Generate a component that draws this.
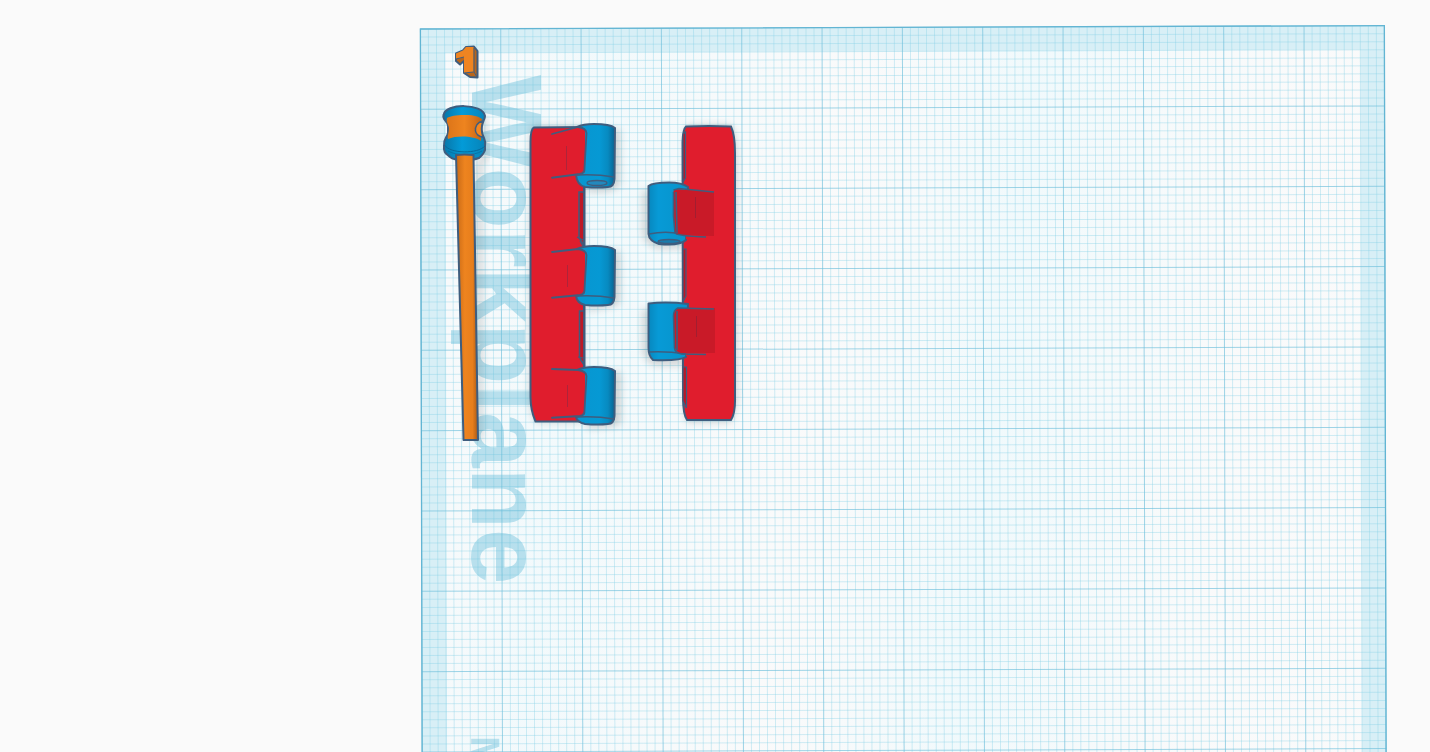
import React from 'react';

const OUTLINE = '#3f5d7e';
const RED = '#e01d2d';
const DARK_RED = '#c91a28';
const STEP = 8.033;

const COUNT_X = 120;
const COUNT_Y = 96;

function Grid() {
  const width = COUNT_X * STEP;
  const height = COUNT_Y * STEP;
  const cols = Array.from({ length: COUNT_X + 1 }, (_, i) => i);
  const rows = Array.from({ length: COUNT_Y + 1 }, (_, i) => i);
  return (
    <g transform="matrix(1 -0.0035 0.0024 1 420.4 29)">
      <rect width={width} height={height} fill="#d8eff6" />
      <rect x="25" y="24" width={width - 49} height={height} fill="#f9fafb" />
      <rect x="25" y="24" width={width - 49} height={height} fill="url(#sheen)" />
      <g stroke="#83cfe6" strokeOpacity="0.36" strokeWidth="1">
        {cols.filter((i) => i % 10 !== 0).map((i) => (
          <line key={`c${i}`} x1={i * STEP} x2={i * STEP} y1="0" y2={height} />
        ))}
        {rows.filter((i) => i % 10 !== 0).map((i) => (
          <line key={`r${i}`} x1="0" x2={width} y1={i * STEP} y2={i * STEP} />
        ))}
      </g>
      <g stroke="#6dbfda" strokeOpacity="0.65" strokeWidth="1">
        {cols.filter((i) => i % 10 === 0).map((i) => (
          <line key={`c${i}`} x1={i * STEP} x2={i * STEP} y1="0" y2={height} />
        ))}
        {rows.filter((i) => i % 10 === 0).map((i) => (
          <line key={`r${i}`} x1="0" x2={width} y1={i * STEP} y2={i * STEP} />
        ))}
      </g>
      <rect width={width} height={height} fill="none" stroke="#62b5d3" strokeWidth="1.3" />
    </g>
  );
}

function PlaneLabels() {
  return (
    <g fill="#64bcd8" fillOpacity="0.42" fontFamily="'Liberation Sans', Arial, sans-serif" fontWeight="700">
      <text transform="translate(472 75) rotate(90)" fontSize="100">Workplane</text>
      <text transform="translate(471 736) rotate(90)" fontSize="41">M</text>
    </g>
  );
}

function Digit() {
  return (
    <g stroke={OUTLINE} strokeWidth="2" strokeLinejoin="round">
      <path d="M466 47L474 46.500L477.500 51V77.500L470 77L464 73V61L460 64.500L456 61V53.500L463 50.500Z" fill="#b8651b" />
      <path d="M466 47H473.500V72L464 73V57.500L456 59V53.500L463 50.500Z" fill="#ee8421" stroke="none" />
      <path d="M474 48V72L477 77M464 73L473.500 72M456 59L464 57" fill="none" strokeWidth="1" />
    </g>
  );
}

function Pin() {
  return (
    <g stroke={OUTLINE} strokeWidth="2" strokeLinejoin="round">
      <path d="M443.500 115C445 103 483 103 485 116C485 119 483 121 482.500 124C481 128 482 134 484 138Q486 142 485 147C486 153 481 156 479 158C471 161 455 161 450 157C447 154 443 153 444 146C443 139 447 138 448 133V126C448 121 442 120 443.500 115Z" fill="url(#pinBlue)" />
      <path d="M447 118C451 116 455 115 465 115C475 115 479 117 482 119C483 122 480 124 480 130C480 135 482 138 481 141C475 136 457 135 448 139C447 136 449 134 449 128C448 123 446 122 447 118Z" fill="url(#pinOrange)" stroke="none" />
      <path d="M483 121C477 122 475 127 475.500 131C476 134 479 137 483 137Q480 129 483 121Z" fill="#f38721" strokeWidth="1.500" />
      <path d="M444.500 145C450 154 478 154 485 146" fill="none" stroke="#07699a" strokeWidth="1" />
      <path d="M448 151C457 156 474 156 482 151" fill="none" stroke="#07699a" strokeWidth="1" opacity="0.7" />
      <path d="M456 155Q464 154 473.500 155L478 440H463.500Z" fill="url(#shaft)" />
    </g>
  );
}

type KnuckleProps = { top: number; height: number; lip: number; tilt: number; hollow?: boolean };

function RightKnuckle({ top, height, lip, tilt, hollow = false }: KnuckleProps) {
  const end = top + height;
  return (
    <g stroke={OUTLINE} strokeLinejoin="round" strokeLinecap="round" fill="none">
      <path
        d={`M577 ${top + 3}Q583 ${top} 594 ${top}Q610 ${top} 615 ${top + 4}L614.500 ${end - 8}Q614 ${end} 608 ${end}Q598 ${end + 1} 585 ${end}Q577 ${end - 2} 576 ${end - lip}Z`}
        fill="url(#blueRight)"
        strokeWidth="2"
      />
      <path d={`M577 ${end - lip}Q597 ${end - lip - 1} 614 ${end - lip + 2}`} strokeWidth="1.500" />
      {hollow && <ellipse cx="597" cy={end - 4} rx="10" ry="2.500" fill="#2389bd" strokeWidth="1.300" />}
      <path d={`M551 ${top + 3 + tilt}L579 ${top + 3}L585 ${top + 5}V${end - lip - 3}L580 ${end - lip}L551 ${end - lip + 1 + tilt / 4}Z`} fill={RED} stroke="none" />
      <path d={`M552 ${top + 3 + tilt}L578 ${top + 3}Q586 ${top + 4} 586.500 ${top + 9}L584.500 ${end - lip - 7}Q585 ${end - lip - 2} 580 ${end - lip - 1}L552 ${end - lip + 1 + tilt / 4}`} strokeWidth="1.800" />
    </g>
  );
}

function LeftPlate() {
  return (
    <g>
      <path d="M533 126H583V422H536Q530 411 530 397L530 142Q531 128 533 126Z" fill="#000" opacity="0.16" filter="url(#shadow)" />
      <path d="M534 127.500L584 127V421.500H535.500Q530.500 410 530.500 397L530.500 142Q530.500 129 534 127.500Z" fill={RED} stroke={OUTLINE} strokeWidth="2" />
      <g fill="#bd1826" stroke={OUTLINE} strokeWidth="1.500">
        <path d="M579 192H584V245L579 238Z" />
        <path d="M579.500 311H584V365L579.500 357Z" />
      </g>
      <path d="M584.500 185V248M584.500 303V368" stroke={OUTLINE} strokeWidth="2" />
      <path d="M577 237L583 240M580 241L584 248M578 357L583 358M580 359L584 365" stroke={OUTLINE} strokeWidth="1.200" />
      <path d="M615 129V184L606 187H587M615 251V301L587 306M616 372V421L587 424" fill="none" stroke="#000" strokeWidth="7" opacity="0.22" filter="url(#shadow)" />
      <RightKnuckle top={124} height={63} lip={12} tilt={7} hollow />
      <RightKnuckle top={246} height={59} lip={9} tilt={3} />
      <RightKnuckle top={367} height={57} lip={7} tilt={-1} />
      <path d="M566.500 146V170M567.500 265V287M567.500 385V407" stroke="#8e2a44" strokeWidth="1" opacity="0.6" />
    </g>
  );
}

function RightPlate() {
  return (
    <g>
      <path d="M686 126H731Q736 138 736 160V400L731 421H686Z" fill="#000" opacity="0.2" filter="url(#shadow)" />
      <path d="M647 190V236L656 244H684M647 309V353L654 361H684" fill="none" stroke="#000" strokeWidth="6" opacity="0.22" filter="url(#shadow)" />
      <path d="M686 126.500Q709 125.500 731 126.500Q735 135 735 153V397Q735.500 413 731 420H687Q683 414 683 397L682.500 142Q683 129 686 126.500Z" fill={RED} stroke={OUTLINE} strokeWidth="2" />
      <g fill="#ba1726" stroke={OUTLINE} strokeWidth="1.200">
        <path d="M683 134L685.500 132V178L683 182Z" />
        <path d="M683 249H686V296L683 302Z" />
        <path d="M683 367H686.500V408L683 401Z" />
      </g>
      <g stroke={OUTLINE} strokeWidth="2" strokeLinejoin="round">
        <path d="M648.500 186Q653 182.500 669 182.500Q682 182.500 688 187L686 240Q680 246 659 244Q649 241 648.500 234Z" fill="url(#blueLeft)" />
        <path d="M649 234Q668 230 686 235" fill="none" strokeWidth="1.500" />
        <ellipse cx="669" cy="241.500" rx="11" ry="2" fill="#187cad" strokeWidth="1.300" />
        <path d="M648.500 303.500Q667 301.500 688 304L686 357Q680 361 653 360Q648.500 356 648.500 348Z" fill="url(#blueLeft)" />
        <path d="M649 352Q666 351 687 354" fill="none" strokeWidth="1.500" />
      </g>
      <path d="M685 189H714V239H686ZM686 308H716V356H686Z" fill={RED} />
      <path d="M676 189L714 192V236L677 235Q674 233 674 221L673 194Q673 190 676 189Z" fill={DARK_RED} />
      <path d="M679 308H715V353H679Q674 350 674 342V313Q674 309 679 308Z" fill={DARK_RED} />
      <path d="M673.500 192V216L675 233Q678 236 706 237M673.500 190L679 188.500L714 192M676 192L677 233" fill="none" stroke={OUTLINE} strokeWidth="1.600" />
      <path d="M714 309L678 308Q673.500 310 673.500 316L674.500 348Q675 353 682 354L706 354.500M677 311V350" fill="none" stroke={OUTLINE} strokeWidth="1.600" />
      <path d="M695.500 197V218M696.500 316V337" stroke="#922136" strokeWidth="1" opacity="0.7" />
    </g>
  );
}

export default function App() {
  return (
    <main className="min-h-screen w-full overflow-hidden bg-[#fafafa]">
      <svg className="block h-auto w-full" viewBox="0 0 1430 752" role="img" aria-label="Workplane">
        <defs>
          <linearGradient id="sheen" x1="0" x2="1" y1="0.2" y2="0.3">
            <stop offset="0" stopColor="#f1f9fb" stopOpacity="0.2" />
            <stop offset="0.15" stopColor="#eff9fc" stopOpacity="0.7" />
            <stop offset="0.42" stopColor="#fafafa" stopOpacity="0.5" />
            <stop offset="0.62" stopColor="#eef9fc" stopOpacity="0.8" />
            <stop offset="0.9" stopColor="#fafafa" stopOpacity="0.5" />
          </linearGradient>
          <linearGradient id="blueRight">
            <stop offset="0" stopColor="#0896d0" />
            <stop offset="0.6" stopColor="#0699d4" />
            <stop offset="0.82" stopColor="#078ac0" />
            <stop offset="1" stopColor="#086190" />
          </linearGradient>
          <linearGradient id="blueLeft">
            <stop offset="0" stopColor="#0788bf" />
            <stop offset="0.25" stopColor="#079ad6" />
            <stop offset="1" stopColor="#0793ca" />
          </linearGradient>
          <linearGradient id="pinBlue">
            <stop offset="0" stopColor="#0875a7" />
            <stop offset="0.45" stopColor="#039bd8" />
            <stop offset="1" stopColor="#0783b8" />
          </linearGradient>
          <linearGradient id="pinOrange">
            <stop offset="0" stopColor="#dc7519" />
            <stop offset="0.5" stopColor="#ee841f" />
            <stop offset="0.75" stopColor="#dc7519" />
            <stop offset="1" stopColor="#ba651b" />
          </linearGradient>
          <linearGradient id="shaft">
            <stop offset="0" stopColor="#c76916" />
            <stop offset="0.4" stopColor="#ee841f" />
            <stop offset="0.75" stopColor="#e77e1c" />
            <stop offset="1" stopColor="#a95a19" />
          </linearGradient>
          <filter id="shadow" x="-50%" y="-20%" width="200%" height="140%">
            <feGaussianBlur stdDeviation="4" />
          </filter>
        </defs>
        <Grid />
        <PlaneLabels />
        <path d="M482 114L486 153L479 166V440" fill="none" stroke="#000" strokeWidth="5" opacity="0.2" filter="url(#shadow)" />
        <Digit />
        <Pin />
        <LeftPlate />
        <RightPlate />
      </svg>
    </main>
  );
}
